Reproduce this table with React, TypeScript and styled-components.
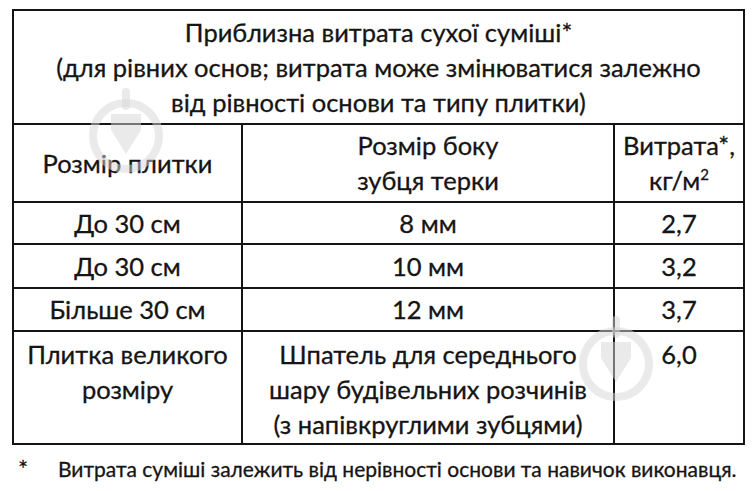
import React from "react";
import styled, { createGlobalStyle } from "styled-components";

const Global = createGlobalStyle`
  html, body { margin: 0; padding: 0; background: #ffffff; }
  body { font-family: Lato, "Noto Sans", sans-serif; color: #161414; }
`;

const Page = styled.div`
  position: relative;
  width: 756px;
  height: 491px;
  overflow: hidden;
  padding: 9px 0 0 12px;
  box-sizing: border-box;
  -webkit-text-stroke: 0.3px #161414;
`;

const Table = styled.table`
  border-collapse: collapse;
  table-layout: fixed;
  width: 731px;
  font-size: 25.5px;
  line-height: 35px;
  color: #161414;
`;

const Row = styled.tr<{ $h: number }>`
  height: ${(p) => p.$h}px;
`;

const Cell = styled.td<{ $top?: boolean }>`
  border: 2px solid #141414;
  text-align: center;
  vertical-align: ${(p) => (p.$top ? "top" : "middle")};
  padding: ${(p) => (p.$top ? "5px 0 0 0" : "0")};
  white-space: nowrap;
`;

const Sup = styled.sup`
  font-size: 15px;
  vertical-align: 10px;
  line-height: 0;
`;

const Footnote = styled.div`
  display: flex;
  align-items: baseline;
  margin-top: 10px;
  font-size: 21px;
  line-height: 26px;
  color: #161414;
`;

const Star = styled.span`
  width: 40px;
  padding-left: 6px;
  font-size: 24px;
`;

const Mark = styled.svg<{ $x: number; $y: number }>`
  position: absolute;
  left: ${(p) => p.$x}px;
  top: ${(p) => p.$y}px;
  pointer-events: none;
`;

function Watermark({ x, y }: { x: number; y: number }) {
  return (
    <Mark $x={x} $y={y} width="90" height="110" viewBox="0 0 90 110">
      <g fill="none" stroke="#d6d6d6" strokeOpacity="0.5">
        <circle cx="45" cy="62" r="33" strokeWidth="8" />
      </g>
      <g fill="#d6d6d6" fillOpacity="0.5">
        <rect x="41" y="14" width="8" height="22" rx="4" />
        <path d="M30 40 H60 V56 L45 80 L30 56 Z" />
      </g>
    </Mark>
  );
}

export default function App() {
  return (
    <Page>
      <Global />
      <Table>
        <colgroup>
          <col style={{ width: 229 }} />
          <col style={{ width: 372 }} />
          <col style={{ width: 130 }} />
        </colgroup>
        <tbody>
          <Row $h={114}>
            <Cell colSpan={3}>
              Приблизна витрата сухої суміші*
              <br />
              (для рівних основ; витрата може змінюватися залежно
              <br />
              від рівності основи та типу плитки)
            </Cell>
          </Row>
          <Row $h={78}>
            <Cell>Розмір плитки</Cell>
            <Cell>
              Розмір боку
              <br />
              зубця терки
            </Cell>
            <Cell>
              Витрата*,
              <br />
              кг/м<Sup>2</Sup>
            </Cell>
          </Row>
          <Row $h={42}>
            <Cell>До 30 см</Cell>
            <Cell>8 мм</Cell>
            <Cell>2,7</Cell>
          </Row>
          <Row $h={44}>
            <Cell>До 30 см</Cell>
            <Cell>10 мм</Cell>
            <Cell>3,2</Cell>
          </Row>
          <Row $h={43}>
            <Cell>Більше 30 см</Cell>
            <Cell>12 мм</Cell>
            <Cell>3,7</Cell>
          </Row>
          <Row $h={113}>
            <Cell $top>
              Плитка великого
              <br />
              розміру
            </Cell>
            <Cell $top>
              Шпатель для середнього
              <br />
              шару будівельних розчинів
              <br />
              (з напівкруглими зубцями)
            </Cell>
            <Cell $top>6,0</Cell>
          </Row>
        </tbody>
      </Table>
      <Footnote>
        <Star>*</Star>
        <span>Витрата суміші залежить від нерівності основи та навичок виконавця.</span>
      </Footnote>
      <Watermark x={81} y={74} />
      <Watermark x={571} y={302} />
    </Page>
  );
}
